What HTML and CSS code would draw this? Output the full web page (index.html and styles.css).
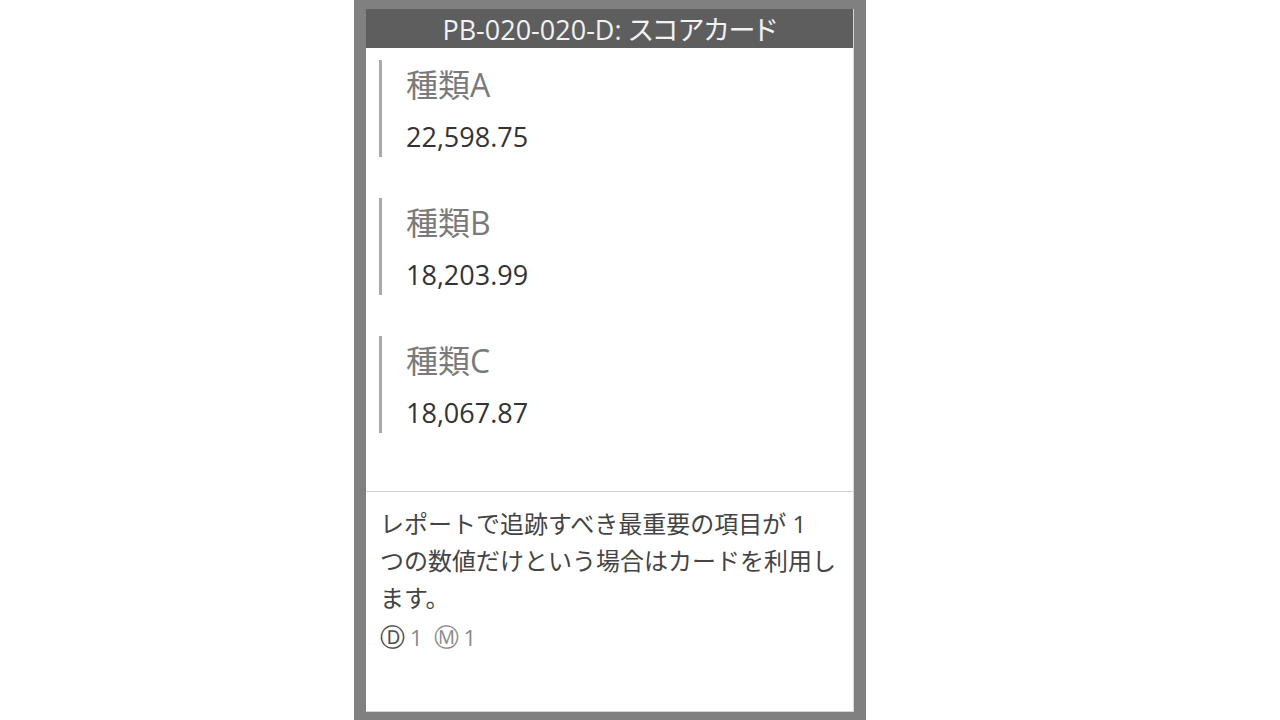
FILE: index.html
```html
<!DOCTYPE html>
<html lang="ja">
<head>
<meta charset="utf-8">
<title>PB-020-020-D: スコアカード</title>
<link rel="stylesheet" href="styles.css">
</head>
<body>
<div class="frame">
  <div class="panel">
    <div class="header">PB-020-020-D: <span class="kana">スコアカード</span></div>
    <div class="items">
      <div class="item">
        <div class="label">種類A</div>
        <div class="value">22,598.75</div>
      </div>
      <div class="item">
        <div class="label">種類B</div>
        <div class="value">18,203.99</div>
      </div>
      <div class="item">
        <div class="label">種類C</div>
        <div class="value">18,067.87</div>
      </div>
    </div>
    <div class="desc">
      <p class="text">レポートで追跡すべき最重要の項目が 1<br>つの数値だけという場合はカードを利用し<br>ます。</p>
      <div class="meta"><span class="circ dark">Ⓓ</span><span class="num">1</span><span class="circ">Ⓜ</span><span class="num">1</span></div>
    </div>
  </div>
</div>
</body>
</html>
```
FILE: styles.css
```css
html, body {
  margin: 0;
  padding: 0;
  background: #ffffff;
}
body {
  font-family: "Open Sans", "Noto Sans CJK JP", sans-serif;
  height: 720px;
  overflow: hidden;
}
.frame {
  margin-left: 354px;
  width: 512px;
  height: 720px;
  box-sizing: border-box;
  background: #808080;
  padding: 9px 12px 8px 12px;
}
.panel {
  height: 100%;
  box-sizing: border-box;
  background: #ffffff;
  border-right: 1px solid #d6d6d6;
  border-bottom: 1px solid #d6d6d6;
  display: flex;
  flex-direction: column;
}
.header {
  height: 39px;
  background: #5e5e5e;
  color: #f2f2f2;
  font-size: 27px;
  line-height: 39px;
  text-align: center;
  white-space: nowrap;
}
.kana {
  font-family: "Noto Sans CJK JP", sans-serif;
  font-feature-settings: "palt";
  font-size: 27px;
}
.items {
  display: flex;
  flex-direction: column;
  gap: 41px;
  padding: 12px 0 58px 13px;
  border-bottom: 1px solid #cfcfcf;
}
.item {
  height: 97px;
  box-sizing: border-box;
  border-left: 3px solid #aaaaaa;
  padding-left: 24px;
}
.label {
  margin-top: 4px;
  font-size: 32px;
  line-height: 42px;
  color: #7a7a7a;
}
.value {
  margin-top: 11px;
  font-size: 27px;
  line-height: 40px;
  color: #333333;
}
.desc {
  padding: 13px 14px 0 14px;
}
.text {
  margin: 0;
  font-size: 24px;
  line-height: 37px;
  color: #444444;
  white-space: nowrap;
}
.meta {
  margin-top: 3px;
  font-size: 22px;
  line-height: 37px;
  color: #8a8a8a;
  display: flex;
  align-items: center;
}
.circ {
  font-family: "DejaVu Sans", sans-serif;
  font-size: 25px;
}
.circ.dark {
  color: #4a4a4a;
}
.num {
  margin-left: 5px;
  margin-right: 11px;
}
```
